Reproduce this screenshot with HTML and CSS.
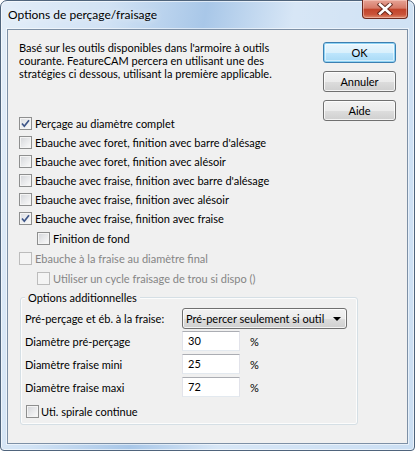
FILE: index.html
```html
<!DOCTYPE html>
<html lang="fr">
<head>
<meta charset="utf-8">
<title>Options de perçage/fraisage</title>
<link rel="stylesheet" href="styles.css">
</head>
<body>
<div class="window">
  <div class="titlebar">
    <span class="title">Options de perçage/fraisage</span>
    <div class="close">
      <svg width="16" height="12" viewBox="0 0 16 12">
        <path d="M3 1.5 L13 10.5 M13 1.5 L3 10.5" stroke="#4a1a10" stroke-opacity="0.75" stroke-width="4.6" stroke-linecap="square"/>
        <path d="M3 1.5 L13 10.5 M13 1.5 L3 10.5" stroke="#ffffff" stroke-width="2.6" stroke-linecap="square"/>
      </svg>
    </div>
  </div>
  <div class="client">
    <p class="intro">Basé sur les outils disponibles dans l'armoire à outils<br>courante. FeatureCAM percera en utilisant une des<br>stratégies ci dessous, utilisant la première applicable.</p>
    <div class="buttons">
      <button class="btn default">OK</button>
      <button class="btn">Annuler</button>
      <button class="btn">Aide</button>
    </div>
    <div class="checks">
      <div class="row"><span class="box checked"><svg width="11" height="11" viewBox="0 0 11 11"><path d="M2 5.5 L4.3 8.2 L9 2.2" fill="none" stroke="#3e5688" stroke-width="1.7"/></svg></span>Perçage au diamètre complet</div>
      <div class="row"><span class="box"></span>Ebauche avec foret, finition avec barre d'alésage</div>
      <div class="row"><span class="box"></span>Ebauche avec foret, finition avec alésoir</div>
      <div class="row"><span class="box"></span>Ebauche avec fraise, finition avec barre d'alésage</div>
      <div class="row"><span class="box"></span>Ebauche avec fraise, finition avec alésoir</div>
      <div class="row"><span class="box checked"><svg width="11" height="11" viewBox="0 0 11 11"><path d="M2 5.5 L4.3 8.2 L9 2.2" fill="none" stroke="#3e5688" stroke-width="1.7"/></svg></span>Ebauche avec fraise, finition avec fraise</div>
      <div class="row tall indent"><span class="box"></span>Finition de fond</div>
      <div class="row tall disabled"><span class="box"></span>Ebauche à la fraise au diamètre final</div>
      <div class="row tall indent disabled"><span class="box"></span>Utiliser un cycle fraisage de trou si dispo ()</div>
    </div>
    <div class="group">
      <span class="group-label">Options additionnelles</span>
      <div class="form">
        <span class="lbl">Pré-perçage et éb. à la fraise:</span>
        <div class="combo"><span class="combo-text">Pré-percer seulement si outil disponible</span><span class="arrow"></span></div>
        <span class="lbl">Diamètre pré-perçage</span>
        <div class="field">30</div>
        <span class="unit">%</span>
        <span class="lbl">Diamètre fraise mini</span>
        <div class="field">25</div>
        <span class="unit">%</span>
        <span class="lbl">Diamètre fraise maxi</span>
        <div class="field">72</div>
        <span class="unit">%</span>
      </div>
      <div class="row spiral"><span class="box"></span>Uti. spirale continue</div>
    </div>
  </div>
</div>
</body>
</html>
```

FILE: styles.css
```css
* { box-sizing: border-box; }
html, body { margin: 0; padding: 0; }
body {
  width: 415px;
  height: 451px;
  overflow: hidden;
  background: #ffffff;
  font-family: Lato, "Liberation Sans", sans-serif;
  font-size: 11px;
  color: #000;
}
.window {
  width: 415px;
  height: 451px;
  border: 1px solid #4f647c;
  border-radius: 7px 7px 4px 4px;
  background:
    linear-gradient(100deg, rgba(255,255,255,0.55) 0%, rgba(255,255,255,0.25) 22%, rgba(120,165,215,0.35) 42%, rgba(255,255,255,0.35) 60%, rgba(255,255,255,0.15) 100%),
    #c2d9f1;
  box-shadow: inset 0 0 0 1px rgba(255,255,255,0.6);
  display: flex;
  flex-direction: column;
}
.titlebar {
  height: 28px;
  display: flex;
  justify-content: space-between;
  align-items: flex-start;
  padding-left: 7px;
  padding-right: 6px;
}
.title {
  font-size: 12px;
  line-height: 28px;
  color: #000;
  text-shadow: 0 0 6px rgba(255,255,255,0.9);
}
.close {
  width: 46px;
  height: 19px;
  margin-top: -1px;
  border: 1px solid #6d2a1f;
  border-top: none;
  border-radius: 0 0 4px 4px;
  background: linear-gradient(#e6a395 0%, #d67a68 45%, #c2442b 52%, #c9533a 80%, #de8a6c 100%);
  box-shadow: inset 0 0 0 1px rgba(255,220,210,0.45);
  display: flex;
  align-items: center;
  justify-content: center;
}
.client {
  flex: 1;
  margin: 0 6px 6px 6px;
  border: 1px solid #7d90a6;
  box-shadow: 0 0 0 1px rgba(255,255,255,0.55);
  background: #f0f0f0;
  padding: 11px 11px 0 11px;
  display: grid;
  grid-template-columns: 1fr 73px;
  grid-template-rows: auto auto auto;
  align-content: start;
}
.intro {
  margin: 0;
  line-height: 13px;
  grid-column: 1;
  grid-row: 1;
}
.buttons {
  grid-column: 2;
  grid-row: 1 / 3;
  display: flex;
  flex-direction: column;
  gap: 8px;
  margin-top: 1px;
}
.btn {
  width: 73px;
  height: 21px;
  padding: 0;
  font-family: inherit;
  font-size: 11px;
  color: #000;
  border: 1px solid #707070;
  border-radius: 3px;
  background: linear-gradient(#f2f2f2 0%, #ebebeb 50%, #dddddd 51%, #cfcfcf 100%);
  box-shadow: inset 0 0 0 1px rgba(255,255,255,0.75);
}
.btn.default {
  border-color: #3c7fb1;
  box-shadow: inset 0 0 0 1px #8fd3f4, inset 0 0 0 2px rgba(255,255,255,0.5);
  background: linear-gradient(#eaf6fd 0%, #d9f0fc 50%, #bee6fd 51%, #a7d9f5 100%);
}
.checks {
  grid-column: 1;
  grid-row: 2;
  margin-top: 34px;
  display: flex;
  flex-direction: column;
}
.row {
  height: 19px;
  display: flex;
  align-items: center;
  gap: 3px;
  white-space: nowrap;
}
.row.tall { height: 20px; }
.row.indent { padding-left: 18px; }
.row.disabled { color: #858585; }
.box {
  width: 13px;
  height: 13px;
  flex: none;
  border: 1px solid #8e8f8f;
  background: linear-gradient(135deg, #d2d4d8 0%, #e6e7e9 45%, #fbfbfb 100%);
  box-shadow: inset 0 0 0 1px #f4f4f4;
  display: flex;
  align-items: center;
  justify-content: center;
}
.box.checked { background: linear-gradient(135deg, #d9dbdf 0%, #ebecee 45%, #fbfbfb 100%); }
.row.disabled .box {
  border-color: #bcbcbc;
  background: #f4f4f4;
  box-shadow: none;
}
.group {
  grid-column: 1 / -1;
  grid-row: 3;
  margin: 9px 38px 0 1px;
  border: 1px solid #d5dfe5;
  border-radius: 3px;
  box-shadow: inset 0 0 0 1px rgba(255,255,255,0.8);
  padding: 10px 4px 6px 4px;
  position: relative;
}
.group-label {
  position: absolute;
  left: 4px;
  top: -7px;
  padding: 0 3px;
  line-height: 13px;
  background: #f0f0f0;
}
.form {
  display: grid;
  grid-template-columns: 157px 58px auto;
  grid-auto-rows: 20px;
  row-gap: 3px;
  align-items: center;
}
.form .lbl { white-space: nowrap; }
.combo {
  grid-column: 2 / 4;
  width: 165px;
  height: 21px;
  align-self: start;
  border: 1px solid #707070;
  border-radius: 3px;
  background: linear-gradient(#f2f2f2 0%, #ebebeb 50%, #dddddd 51%, #cfcfcf 100%);
  box-shadow: inset 0 0 0 1px rgba(255,255,255,0.75);
  display: flex;
  align-items: center;
  padding-left: 3px;
  padding-right: 5px;
  gap: 6px;
}
.combo-text {
  flex: 1;
  overflow: hidden;
  white-space: nowrap;
}
.arrow {
  width: 0;
  height: 0;
  border-left: 4px solid transparent;
  border-right: 4px solid transparent;
  border-top: 4px solid #000;
  flex: none;
}
.field {
  width: 58px;
  height: 20px;
  background: #fff;
  border: 1px solid #e2e3ea;
  border-top-color: #abadb3;
  border-bottom-color: #e3e9ef;
  padding-left: 5px;
  line-height: 17px;
}
.unit { padding-left: 10px; }
.row.spiral {
  height: 13px;
  margin-top: 8px;
  padding-left: 1px;
  gap: 2px;
}
```
